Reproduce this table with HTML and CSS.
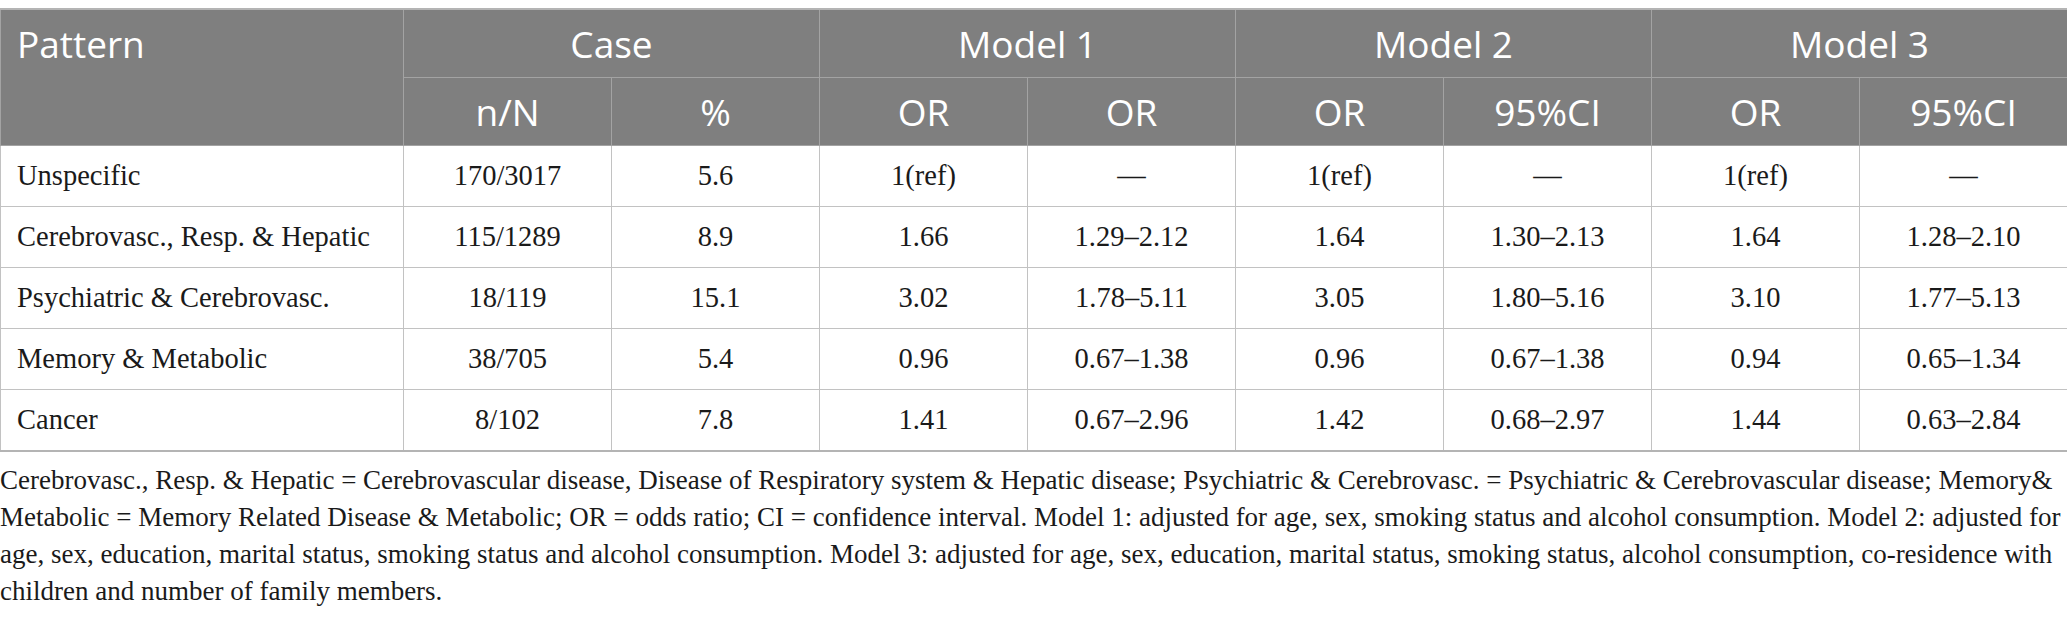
FILE: index.html
```html
<!DOCTYPE html>
<html>
<head>
  <title>Pattern table</title>
  <meta charset="UTF-8">
  <link rel="stylesheet" href="styles.css">
</head>
<body>

  <table id="pattern-table">
    <colgroup>
      <col class="col-pattern">
      <col span="8" class="col-num">
    </colgroup>
    <thead>
      <tr class="head-top">
        <th rowspan="2" class="head-pattern">Pattern</th>
        <th colspan="2">Case</th>
        <th colspan="2">Model 1</th>
        <th colspan="2">Model 2</th>
        <th colspan="2">Model 3</th>
      </tr>
      <tr class="head-sub">
        <th>n/N</th>
        <th>%</th>
        <th>OR</th>
        <th>OR</th>
        <th>OR</th>
        <th>95%CI</th>
        <th>OR</th>
        <th>95%CI</th>
      </tr>
    </thead>
    <tbody>
      <tr>
        <td>Unspecific</td>
        <td>170/3017</td>
        <td>5.6</td>
        <td>1(ref)</td>
        <td>—</td>
        <td>1(ref)</td>
        <td>—</td>
        <td>1(ref)</td>
        <td>—</td>
      </tr>
      <tr>
        <td>Cerebrovasc., Resp. &amp; Hepatic</td>
        <td>115/1289</td>
        <td>8.9</td>
        <td>1.66</td>
        <td>1.29–2.12</td>
        <td>1.64</td>
        <td>1.30–2.13</td>
        <td>1.64</td>
        <td>1.28–2.10</td>
      </tr>
      <tr>
        <td>Psychiatric &amp; Cerebrovasc.</td>
        <td>18/119</td>
        <td>15.1</td>
        <td>3.02</td>
        <td>1.78–5.11</td>
        <td>3.05</td>
        <td>1.80–5.16</td>
        <td>3.10</td>
        <td>1.77–5.13</td>
      </tr>
      <tr>
        <td>Memory &amp; Metabolic</td>
        <td>38/705</td>
        <td>5.4</td>
        <td>0.96</td>
        <td>0.67–1.38</td>
        <td>0.96</td>
        <td>0.67–1.38</td>
        <td>0.94</td>
        <td>0.65–1.34</td>
      </tr>
      <tr>
        <td>Cancer</td>
        <td>8/102</td>
        <td>7.8</td>
        <td>1.41</td>
        <td>0.67–2.96</td>
        <td>1.42</td>
        <td>0.68–2.97</td>
        <td>1.44</td>
        <td>0.63–2.84</td>
      </tr>
    </tbody>
  </table>

  <p class="table-note">Cerebrovasc., Resp. &amp; Hepatic = Cerebrovascular disease, Disease of Respiratory system &amp; Hepatic disease; Psychiatric &amp; Cerebrovasc. = Psychiatric &amp; Cerebrovascular disease; Memory&amp; Metabolic = Memory Related Disease &amp; Metabolic; OR = odds ratio; CI = confidence interval. Model 1: adjusted for age, sex, smoking status and alcohol consumption. Model 2: adjusted for age, sex, education, marital status, smoking status and alcohol consumption. Model 3: adjusted for age, sex, education, marital status, smoking status, alcohol consumption, co-residence with children and number of family members.</p>

</body>
</html>
```

FILE: styles.css
```css
body {
  margin: 0;
  padding-top: 8px;
  background-color: #fff;
  color: #1a1a1a;
  font-family: "Liberation Serif", "Times New Roman", serif;
}

#pattern-table {
  width: 2067px;
  table-layout: fixed;
  border-collapse: collapse;
  border-top: 2px solid #b4b4b4;
  border-bottom: 2px solid #b4b4b4;
}

.col-pattern {
  width: 403px;
}

.col-num {
  width: 208px;
}

/* header rows - grey band, white sans text */
#pattern-table th {
  background-color: #7f7f7f;
  color: #fff;
  font-family: "Open Sans", "Noto Sans", sans-serif;
  font-weight: 400;
  font-size: 37px;
  text-align: center;
  padding: 0;
  border: 1px solid #a3a3a3;
}

.head-top th {
  height: 67px;
}

.head-sub th {
  height: 67px;
}

#pattern-table th.head-pattern {
  text-align: left;
  vertical-align: top;
  line-height: 67px;
  padding-left: 16px;
}

#pattern-table td {
  height: 60px;
  padding: 0;
  border: 1px solid #c2c2c2;
  text-align: center;
  font-size: 28.5px;
}

#pattern-table td:first-child {
  text-align: left;
  padding-left: 16px;
}

#pattern-table tr:first-child th {
  border-top: none;
}

.table-note {
  margin: 10px 0 0 0;
  font-size: 27px;
  line-height: 37px;
}
```
